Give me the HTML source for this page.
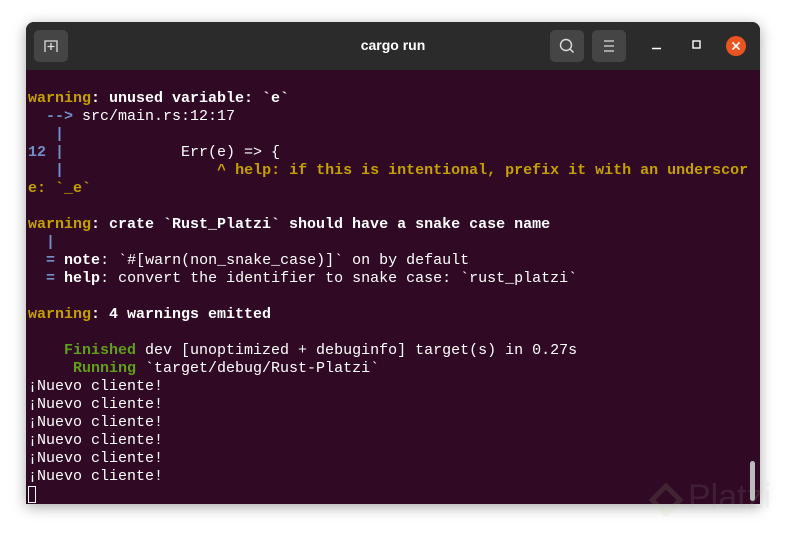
<!DOCTYPE html>
<html><head><meta charset="utf-8"><style>
html,body{margin:0;padding:0;width:786px;height:533px;background:#fff;overflow:hidden;font-family:"Liberation Sans",sans-serif}
.win{position:absolute;left:26px;top:22px;width:734px;height:482px;border-radius:8px 8px 0 0;overflow:hidden;box-shadow:0 3px 14px rgba(0,0,0,.35);background:#300a24}
.tb{position:absolute;left:0;top:0;width:734px;height:48px;background:#2b2b2b}
.btn{position:absolute;top:8px;width:34px;height:32px;background:#454545;border-radius:5px}
.title{position:absolute;left:0;width:734px;top:15px;text-align:center;color:#fff;font-weight:bold;font-size:14px}
pre{position:absolute;left:2px;top:50px;margin:0;font-family:"Liberation Mono",monospace;font-size:15px;line-height:18px;color:#fff}
.y{color:#c4a000;font-weight:bold}.b{color:#7290c8;font-weight:bold}.w{font-weight:bold}.g{color:#5ea01c;font-weight:bold}
.cur{display:inline-block;width:8px;height:17px;border:1px solid #fff;vertical-align:-4px;box-sizing:border-box}
.sb{position:absolute;left:724px;top:439px;width:5px;height:40px;background:#bbb;border-radius:3px}
</style></head><body>
<div class="win">
<div class="tb">
<div class="btn" style="left:8px"><svg width="34" height="32"><path d="M11 22V11h12v11" fill="none" stroke="#ddd" stroke-width="1.3"/><path d="M17 13v7M13.5 16.5h7" stroke="#ddd" stroke-width="1.3"/></svg></div>
<div class="title">cargo run</div>
<div class="btn" style="left:524px"><svg width="34" height="32"><circle cx="16" cy="15" r="5.5" fill="none" stroke="#ddd" stroke-width="1.4"/><path d="M20 19l3.5 3.5" stroke="#ddd" stroke-width="1.5"/></svg></div>
<div class="btn" style="left:566px"><svg width="34" height="32"><path d="M12 11h10M12 16h10M12 21h10" stroke="#ddd" stroke-width="1.3"/></svg></div>
<svg style="position:absolute;left:620px;top:14px" width="110" height="22"><path d="M6 12.5h9" stroke="#fff" stroke-width="1.5"/><rect x="47" y="5" width="7" height="7" fill="none" stroke="#fff" stroke-width="1.4"/><circle cx="90" cy="10" r="10" fill="#e95420"/><path d="M86.5 6.5l7 7M93.5 6.5l-7 7" stroke="#fff" stroke-width="1.6"/></svg>
</div>
<pre>

<span class="y">warning</span><span class="w">: unused variable: `e`</span>
  <span class="b">--&gt;</span> src/main.rs:12:17
   <span class="b">|</span>
<span class="b">12 |</span>             Err(e) =&gt; {
   <span class="b">|</span>                 <span class="y">^ help: if this is intentional, prefix it with an underscor</span>
<span class="y">e: `_e`</span>

<span class="y">warning</span><span class="w">: crate `Rust_Platzi` should have a snake case name</span>
  <span class="b">|</span>
  <span class="b">=</span> <span class="w">note</span>: `#[warn(non_snake_case)]` on by default
  <span class="b">=</span> <span class="w">help</span>: convert the identifier to snake case: `rust_platzi`

<span class="y">warning</span><span class="w">: 4 warnings emitted</span>

    <span class="g">Finished</span> dev [unoptimized + debuginfo] target(s) in 0.27s
     <span class="g">Running</span> `target/debug/Rust-Platzi`
¡Nuevo cliente!
¡Nuevo cliente!
¡Nuevo cliente!
¡Nuevo cliente!
¡Nuevo cliente!
¡Nuevo cliente!
<span class="cur"></span></pre>
<div class="sb"></div>
</div>
<div style="position:absolute;left:688px;top:478px;font-size:34px;color:rgba(180,180,180,.12);font-family:'Liberation Sans',sans-serif">Platzi</div>
<svg style="position:absolute;left:646px;top:482px" width="40" height="40"><path d="M20 4L34 18 20 32 6 18Z" fill="none" stroke="rgba(190,220,150,.12)" stroke-width="5"/></svg>
</body></html>
